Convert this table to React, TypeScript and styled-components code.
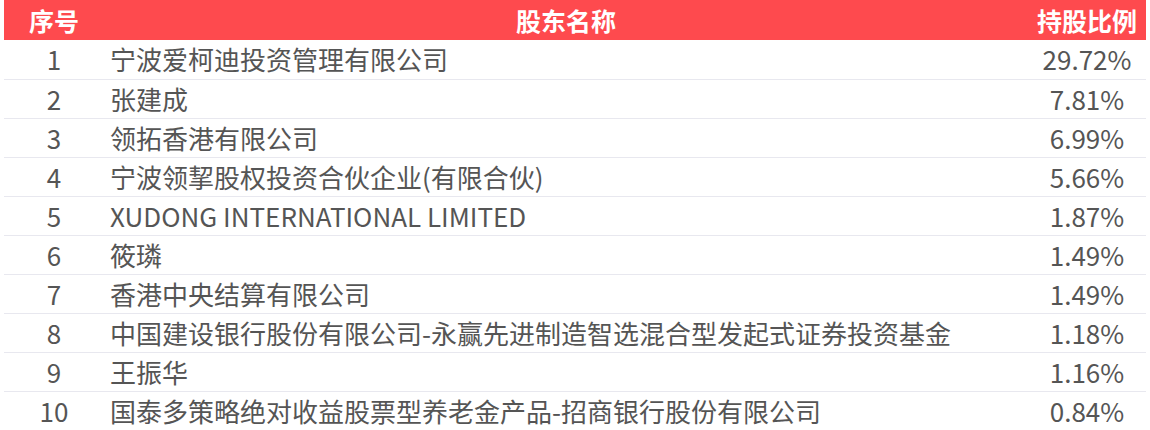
import React from "react";
import styled, { createGlobalStyle } from "styled-components";

const GlobalStyle = createGlobalStyle`
  html, body { margin: 0; padding: 0; background: #ffffff; }
  body { font-family: "Noto Sans CJK SC", "Noto Sans", sans-serif; }
`;

const Wrapper = styled.div`
  padding: 0 4px;
  width: 1150px;
  box-sizing: border-box;
`;

const Table = styled.table`
  width: 100%;
  border-collapse: collapse;
  table-layout: fixed;
`;

const HeadRow = styled.tr`
  background: #fe4a4e;
  height: 40px;
`;

const Th = styled.th`
  color: #ffffff;
  font-size: 25px;
  font-weight: 700;
  line-height: 40px;
  padding: 0;
  text-align: center;
  white-space: nowrap;
`;

const Row = styled.tr<{ $last?: boolean }>`
  height: 39px;
  border-bottom: ${(p) => (p.$last ? "none" : "1px solid #e8e8ef")};
`;

const Td = styled.td<{ $kind: "idx" | "name" | "pct" }>`
  color: #555555;
  font-size: 26px;
  line-height: 38px;
  padding: 0;
  white-space: nowrap;
  text-align: ${(p) => (p.$kind === "name" ? "left" : "center")};
  padding-left: ${(p) => (p.$kind === "name" ? "6px" : "0")};
`;

const data: [string, string][] = [
  ["宁波爱柯迪投资管理有限公司", "29.72%"],
  ["张建成", "7.81%"],
  ["领拓香港有限公司", "6.99%"],
  ["宁波领挈股权投资合伙企业(有限合伙)", "5.66%"],
  ["XUDONG INTERNATIONAL LIMITED", "1.87%"],
  ["筱璘", "1.49%"],
  ["香港中央结算有限公司", "1.49%"],
  ["中国建设银行股份有限公司-永赢先进制造智选混合型发起式证券投资基金", "1.18%"],
  ["王振华", "1.16%"],
  ["国泰多策略绝对收益股票型养老金产品-招商银行股份有限公司", "0.84%"],
];

export default function App() {
  return (
    <Wrapper>
      <GlobalStyle />
      <Table>
        <colgroup>
          <col style={{ width: 100 }} />
          <col />
          <col style={{ width: 118 }} />
        </colgroup>
        <thead>
          <HeadRow>
            <Th>序号</Th>
            <Th>股东名称</Th>
            <Th>持股比例</Th>
          </HeadRow>
        </thead>
        <tbody>
          {data.map(([name, pct], i) => (
            <Row key={i} $last={i === data.length - 1}>
              <Td $kind="idx">{i + 1}</Td>
              <Td $kind="name">{name}</Td>
              <Td $kind="pct">{pct}</Td>
            </Row>
          ))}
        </tbody>
      </Table>
    </Wrapper>
  );
}
